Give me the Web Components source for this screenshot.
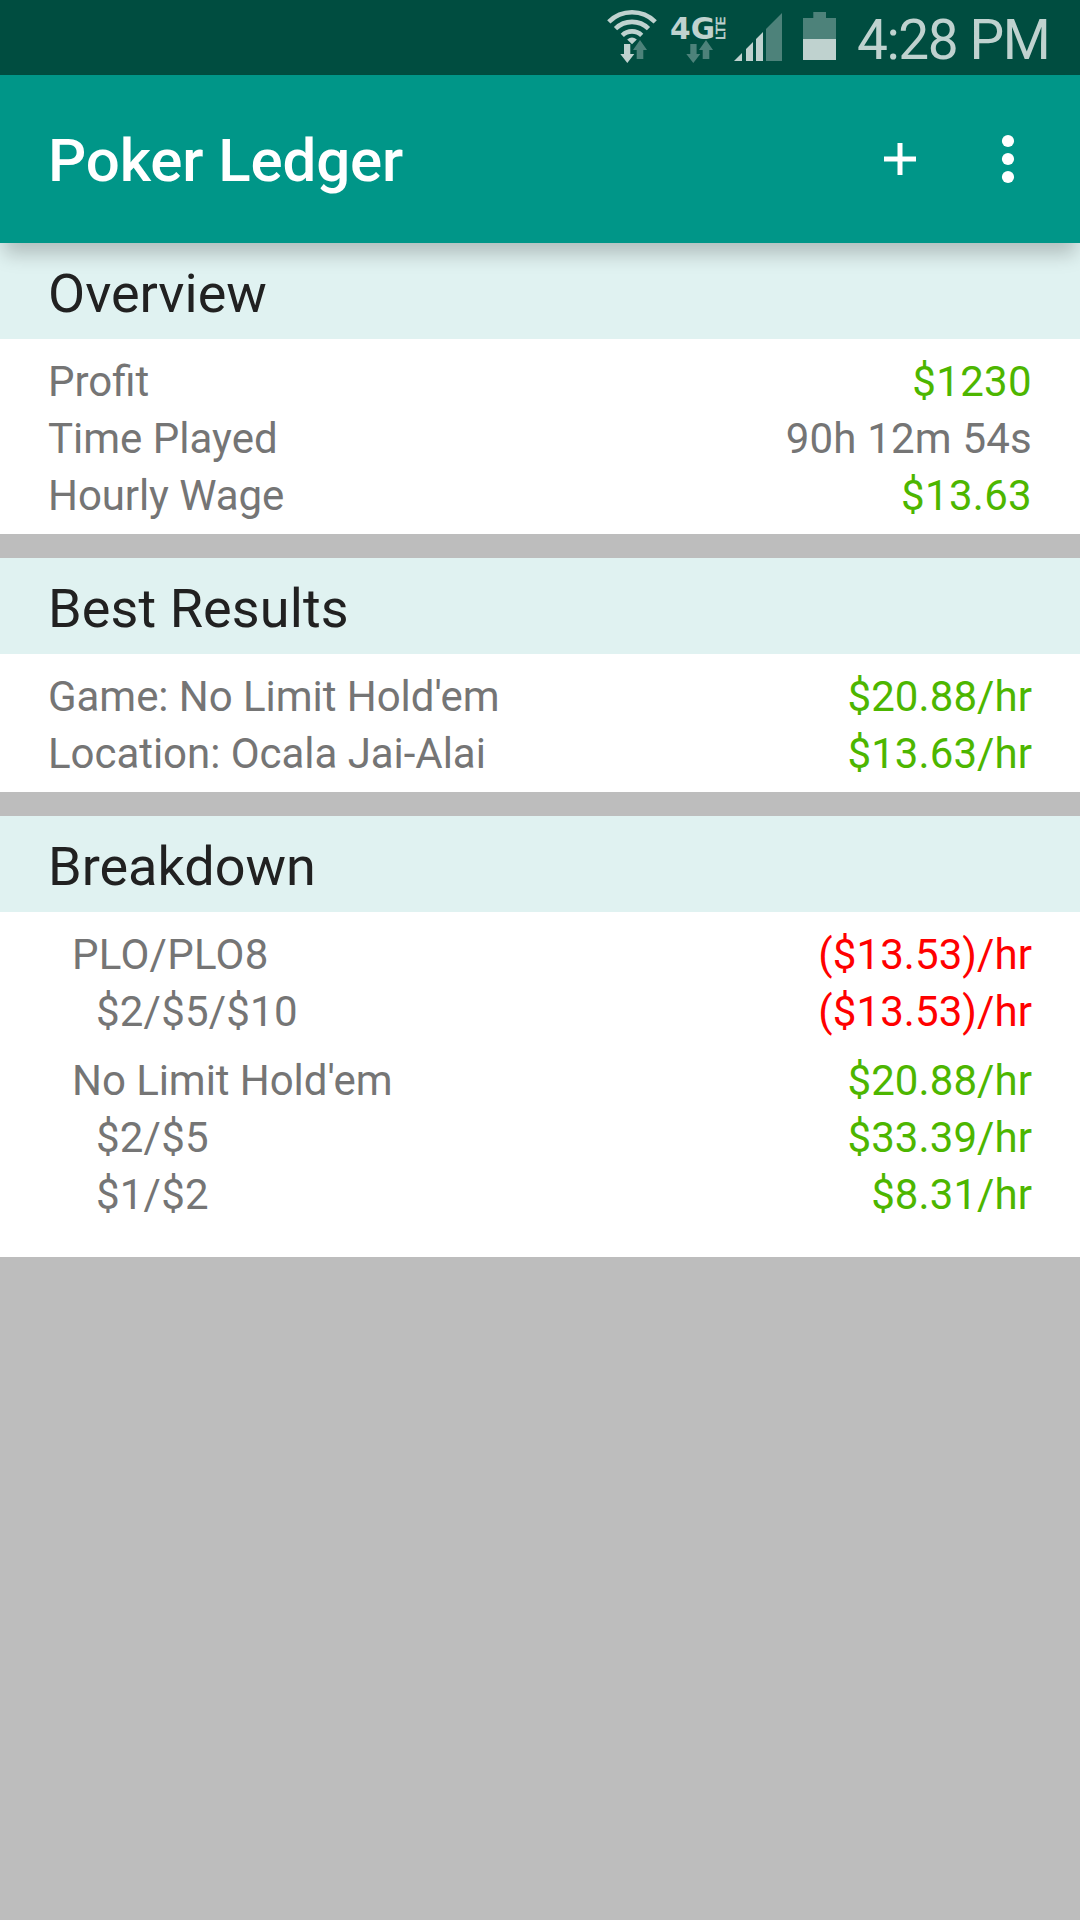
<!DOCTYPE html>
<html lang="en">
<head>
<meta charset="utf-8">
<title>Poker Ledger</title>
<style>
html,body{margin:0;padding:0}
body{background:#bdbdbd;font-family:Roboto,"Liberation Sans",sans-serif;height:1920px;overflow:hidden}
</style>
</head>
<body>
<ledger-app>
  <status-bar slot="top">4:28 PM</status-bar>
  <app-bar slot="top">Poker Ledger</app-bar>
  <ledger-card heading="Overview">
    <ledger-row kind="gain" style="--value-spacing:.35px"><span>Profit</span><span slot="value">$1230</span></ledger-row>
    <ledger-row style="--value-spacing:.2px"><span>Time Played</span><span slot="value">90h 12m 54s</span></ledger-row>
    <ledger-row kind="gain" style="--value-spacing:.3px;--label-spacing:-.08px"><span>Hourly Wage</span><span slot="value">$13.63</span></ledger-row>
  </ledger-card>
  <ledger-card heading="Best Results" style="--heading-spacing:.1px">
    <ledger-row kind="gain" style="--label-spacing:-.05px"><span>Game: No Limit Hold'em</span><span slot="value">$20.88/hr</span></ledger-row>
    <ledger-row kind="gain" style="--label-spacing:-.04px"><span>Location: Ocala Jai-Alai</span><span slot="value">$13.63/hr</span></ledger-row>
  </ledger-card>
  <ledger-card heading="Breakdown">
    <ledger-group>
      <ledger-row level="1" kind="loss" style="--label-spacing:.3px"><span>PLO/PLO8</span><span slot="value">($13.53)/hr</span></ledger-row>
      <ledger-row level="2" kind="loss"><span>$2/$5/$10</span><span slot="value">($13.53)/hr</span></ledger-row>
    </ledger-group>
    <ledger-group>
      <ledger-row level="1" kind="gain" style="--label-spacing:-.06px"><span>No Limit Hold'em</span><span slot="value">$20.88/hr</span></ledger-row>
      <ledger-row level="2" kind="gain"><span>$2/$5</span><span slot="value">$33.39/hr</span></ledger-row>
      <ledger-row level="2" kind="gain"><span>$1/$2</span><span slot="value">$8.31/hr</span></ledger-row>
    </ledger-group>
  </ledger-card>
</ledger-app>
<script>
function define(name, html) {
  customElements.define(name, class extends HTMLElement {
    constructor() {
      super();
      this.attachShadow({ mode: 'open' }).innerHTML = html;
    }
    connectedCallback() {
      const heading = this.shadowRoot.querySelector('h2');
      if (heading) heading.textContent = this.getAttribute('heading');
    }
  });
}

define('ledger-app', `
<style>
:host{display:flex;flex-direction:column;width:1080px;height:1920px;background:#bdbdbd}
header{position:relative;z-index:1}
main{display:flex;flex-direction:column;gap:24px}
</style>
<header><slot name="top"></slot></header>
<main><slot></slot></main>`);

define('status-bar', `
<style>
:host{display:flex;box-sizing:border-box;height:75px;background:#004d40;color:#bfd2cf;padding-right:30px;justify-content:flex-end;align-items:center}
svg{display:block;flex:none}
.l{fill:#bfd2cf}.d{fill:#4d827a}
.time{font-size:55px;line-height:75px;font-weight:400;letter-spacing:-1.45px;padding:6px 0 0 1px;width:194px;box-sizing:border-box;white-space:nowrap}
</style>
<svg width="260" height="75" viewBox="596 0 260 75">
  <g fill="none" stroke="#bfd2cf" stroke-width="4.6">
    <path d="M608.8 21.8A33 33 0 0 1 655.2 21.8"/>
    <path d="M615.5 28.6A23.5 23.5 0 0 1 648.5 28.6"/>
    <path d="M622.3 35.3A14 14 0 0 1 641.7 35.3"/>
  </g>
  <path class="l" d="M627.2 39.4Q632 35.4 636.8 39.4L632 44.2Z"/>
  <path class="l" d="M624 44h6.3v10h4L627.3 63l-7-9H624Z"/>
  <path class="d" d="M640 40l7 10h-3.7v9h-6.6v-9H633Z"/>
  <path class="d" d="M690.3 44h6.3v10h3.7l-7 9-7-9h4Z"/>
  <path class="d" d="M706 40l7 10h-3.7v9h-6.6v-9H699Z"/>
  <text class="l" x="670" y="39" font-family="DejaVu Sans" font-weight="700" font-size="30" textLength="45" lengthAdjust="spacingAndGlyphs">4G</text>
  <text class="l" transform="translate(724.6 40) rotate(-90)" font-family="DejaVu Sans" font-weight="400" stroke="#bfd2cf" stroke-width=".5" font-size="11.400" textLength="23.500" lengthAdjust="spacingAndGlyphs">LTE</text>
  <path class="l" d="M734 61l8-8v8ZM746 61V49l7-7v19ZM756 61V39l7-7v29Z"/>
  <path class="d" d="M766 61V29l16-16v48Z"/>
  <path class="d" d="M803 39V18h10.3v-6H826v6h10v21Z"/>
  <path class="l" d="M803 39h33v21h-33Z"/>
</svg>
<div class="time"><slot></slot></div>`);

define('app-bar', `
<style>
:host{display:flex;align-items:center;box-sizing:border-box;height:168px;padding:0 36px 0 48px;background:#009688;color:#fff;box-shadow:0 15px 18px -4px rgba(0,0,0,.21)}
.title{flex:1;font-size:60px;font-weight:500;line-height:70px;padding-top:4px;letter-spacing:-.12px}
.actions{display:flex;gap:36px}
svg{display:block;fill:#fff}
</style>
<div class="title"><slot></slot></div>
<div class="actions">
  <svg width="72" height="72" viewBox="0 0 72 72"><path d="M33.500 20h5v13.500H52v5H38.500V52h-5V38.500H20v-5h13.500Z"/></svg>
  <svg width="72" height="72" viewBox="0 0 72 72"><circle cx="36" cy="18" r="6.100"/><circle cx="36" cy="36" r="6.100"/><circle cx="36" cy="54" r="6.100"/></svg>
</div>`);

define('ledger-card', `
<style>
:host{display:block;background:#fff}
h2{margin:0;box-sizing:border-box;height:96px;padding:3px 48px 0;background:#e0f2f1;color:#212121;font-size:54px;font-weight:400;line-height:96px;letter-spacing:var(--heading-spacing,normal)}
.body{padding:14px 48px 10px}
</style>
<h2></h2>
<div class="body"><slot></slot></div>`);

define('ledger-group', `
<style>
:host{display:block;padding-bottom:12px}
:host(:last-child){padding-bottom:24px}
</style>
<slot></slot>`);

define('ledger-row', `
<style>
:host{display:flex;justify-content:space-between;height:57px;line-height:57px;font-size:42px;color:#757575;white-space:nowrap}
:host([level="1"]){padding-left:24px}
:host([level="2"]){padding-left:48px;--label-spacing:.2px}
.label{letter-spacing:var(--label-spacing,normal)}
.value{letter-spacing:var(--value-spacing,.08px)}
:host([kind="gain"]) .value{color:#4db600}
:host([kind="loss"]) .value{color:#f00}
</style>
<div class="label"><slot></slot></div>
<div class="value"><slot name="value"></slot></div>`);
</script>
</body>
</html>
